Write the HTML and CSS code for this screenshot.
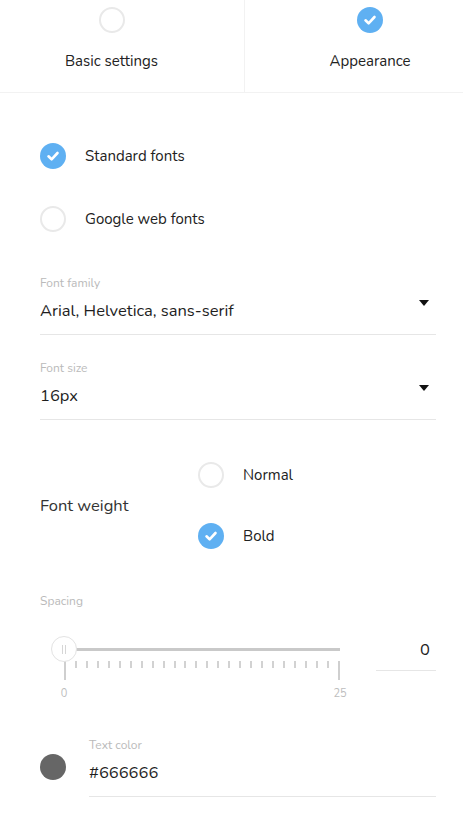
FILE: index.html
```html
<!DOCTYPE html>
<html lang="en">
<head>
<meta charset="utf-8">
<title>Appearance settings</title>
<link rel="stylesheet" href="styles.css">
</head>
<body>
<div class="tabs">
  <div class="tab tab-left">
    <span class="radio"></span>
    <span class="tab-label">Basic settings</span>
  </div>
  <div class="tab tab-right">
    <span class="radio checked"><svg viewBox="0 0 26 26" width="26" height="26"><path d="M8.5 13.3 L11.6 16.3 L17.5 10" fill="none" stroke="#fff" stroke-width="2.6" stroke-linecap="round" stroke-linejoin="round"/></svg></span>
    <span class="tab-label">Appearance</span>
  </div>
</div>

<main class="content">
  <div class="radio-group">
    <div class="radio-row">
      <span class="radio checked"><svg viewBox="0 0 26 26" width="26" height="26"><path d="M8.5 13.3 L11.6 16.3 L17.5 10" fill="none" stroke="#fff" stroke-width="2.6" stroke-linecap="round" stroke-linejoin="round"/></svg></span>
      <span class="radio-text">Standard fonts</span>
    </div>
    <div class="radio-row">
      <span class="radio"></span>
      <span class="radio-text">Google web fonts</span>
    </div>
  </div>

  <div class="field field-first">
    <div class="field-label">Font family</div>
    <div class="select-row">
      <span class="field-value">Arial, Helvetica, sans-serif</span>
      <span class="caret"></span>
    </div>
  </div>

  <div class="field field-second">
    <div class="field-label">Font size</div>
    <div class="select-row">
      <span class="field-value">16px</span>
      <span class="caret"></span>
    </div>
  </div>

  <div class="weight">
    <div class="weight-label">Font weight</div>
    <div class="weight-options">
      <div class="radio-row">
        <span class="radio"></span>
        <span class="radio-text">Normal</span>
      </div>
      <div class="radio-row">
        <span class="radio checked"><svg viewBox="0 0 26 26" width="26" height="26"><path d="M8.5 13.3 L11.6 16.3 L17.5 10" fill="none" stroke="#fff" stroke-width="2.6" stroke-linecap="round" stroke-linejoin="round"/></svg></span>
        <span class="radio-text">Bold</span>
      </div>
    </div>
  </div>

  <div class="spacing">
    <div class="field-label">Spacing</div>
    <div class="spacing-row">
      <div class="slider">
        <div class="track"></div>
        <div class="thumb"><span></span><span></span></div>
        <div class="ticks">
          <i class="major"></i><i></i><i></i><i></i><i></i><i></i><i></i><i></i><i></i><i></i><i></i><i></i><i></i><i></i><i></i><i></i><i></i><i></i><i></i><i></i><i></i><i></i><i></i><i></i><i></i><i class="major"></i>
        </div>
        <div class="scale">
          <span>0</span><span>25</span>
        </div>
      </div>
      <div class="num-input">0</div>
    </div>
  </div>

  <div class="color-row">
    <span class="swatch"></span>
    <div class="field color-field">
      <div class="field-label">Text color</div>
      <div class="select-row">
        <span class="field-value">#666666</span>
      </div>
    </div>
  </div>
</main>
</body>
</html>
```

FILE: styles.css
```css
* { box-sizing: border-box; }

html, body {
  margin: 0;
  padding: 0;
  background: #fff;
}

body {
  font-family: "Nunito", "Lato", "Open Sans", sans-serif;
  color: #222;
  width: 463px;
  height: 815px;
  overflow: hidden;
}

.tabs {
  display: flex;
  height: 93px;
  border-bottom: 1px solid #f2f2f2;
}

.tab {
  display: flex;
  flex-direction: column;
  align-items: center;
  padding-top: 7px;
}

.tab-left {
  width: 245px;
  padding-right: 21px;
  border-right: 1px solid #f2f2f2;
}

.tab-right {
  flex: 1;
  padding-left: 32px;
}

.tab-label {
  margin-top: 18px;
  font-size: 15px;
  line-height: 20px;
  color: #222;
}

.radio {
  display: block;
  width: 26px;
  height: 26px;
  border-radius: 50%;
  border: 2px solid #e9e9e9;
  flex: none;
}

.radio.checked {
  border: none;
  background: #5fb0f2;
}

.radio svg { display: block; }

.content {
  padding: 0 27px 0 40px;
}

.radio-group {
  margin-top: 50px;
  display: flex;
  flex-direction: column;
  gap: 37px;
}

.radio-row {
  display: flex;
  align-items: center;
  height: 26px;
}

.radio-text {
  margin-left: 19px;
  font-size: 15px;
  color: #222;
}

.field {
  border-bottom: 1px solid #e6e6e6;
  padding-bottom: 12px;
}

.field-first { margin-top: 43px; }
.field-second { margin-top: 25px; }

.field-label {
  font-size: 12px;
  line-height: 16px;
  color: #bababa;
}

.select-row {
  display: flex;
  justify-content: space-between;
  align-items: flex-start;
  margin-top: 9px;
}

.field-value {
  font-size: 16.5px;
  line-height: 22px;
  color: #1e1e1e;
}

.caret {
  width: 0;
  height: 0;
  border-left: 5px solid transparent;
  border-right: 5px solid transparent;
  border-top: 6px solid #111;
  margin-top: 0;
  margin-right: 7px;
}

.weight {
  margin-top: 42px;
  display: flex;
  align-items: center;
}

.weight-label {
  width: 158px;
  font-size: 16.5px;
  color: #333;
}

.weight-options {
  display: flex;
  flex-direction: column;
  gap: 35px;
}

.weight-options .radio-text { margin-left: 19px; }

.spacing {
  margin-top: 44px;
}

.spacing-row {
  display: flex;
  align-items: flex-start;
  margin-top: 26px;
}

.slider {
  position: relative;
  margin-left: 24px;
  width: 276px;
  padding-top: 13px;
}

.track {
  height: 3px;
  background: #c9c9c9;
}

.thumb {
  position: absolute;
  left: -13px;
  top: 1px;
  width: 26px;
  height: 26px;
  border-radius: 50%;
  background: #fff;
  border: 1px solid #e3e3e3;
  display: flex;
  justify-content: center;
  align-items: center;
  gap: 2px;
}

.thumb span {
  width: 1px;
  height: 9px;
  background: #d6d6d6;
}

.ticks {
  display: flex;
  justify-content: space-between;
  align-items: flex-start;
  margin-top: 10px;
}

.ticks i {
  display: block;
  width: 2px;
  height: 7px;
  background: #d2d2d2;
}

.ticks i.major {
  width: 2px;
  height: 19px;
  background: #cfcfcf;
}

.scale {
  display: flex;
  justify-content: space-between;
  margin: 7px -10px 0;
}

.scale span {
  width: 20px;
  text-align: center;
  font-size: 11px;
  line-height: 14px;
  color: #bdbdbd;
}

.num-input {
  margin-left: auto;
  width: 60px;
  padding: 4px 6px 9px 0;
  text-align: right;
  font-size: 16.5px;
  line-height: 22px;
  color: #1e1e1e;
  border-bottom: 1px solid #e6e6e6;
}

.color-row {
  display: flex;
  align-items: center;
  margin-top: 36px;
}

.swatch {
  width: 26px;
  height: 26px;
  border-radius: 50%;
  background: #666;
  flex: none;
}

.color-field {
  flex: 1;
  margin-left: 23px;
}
```
